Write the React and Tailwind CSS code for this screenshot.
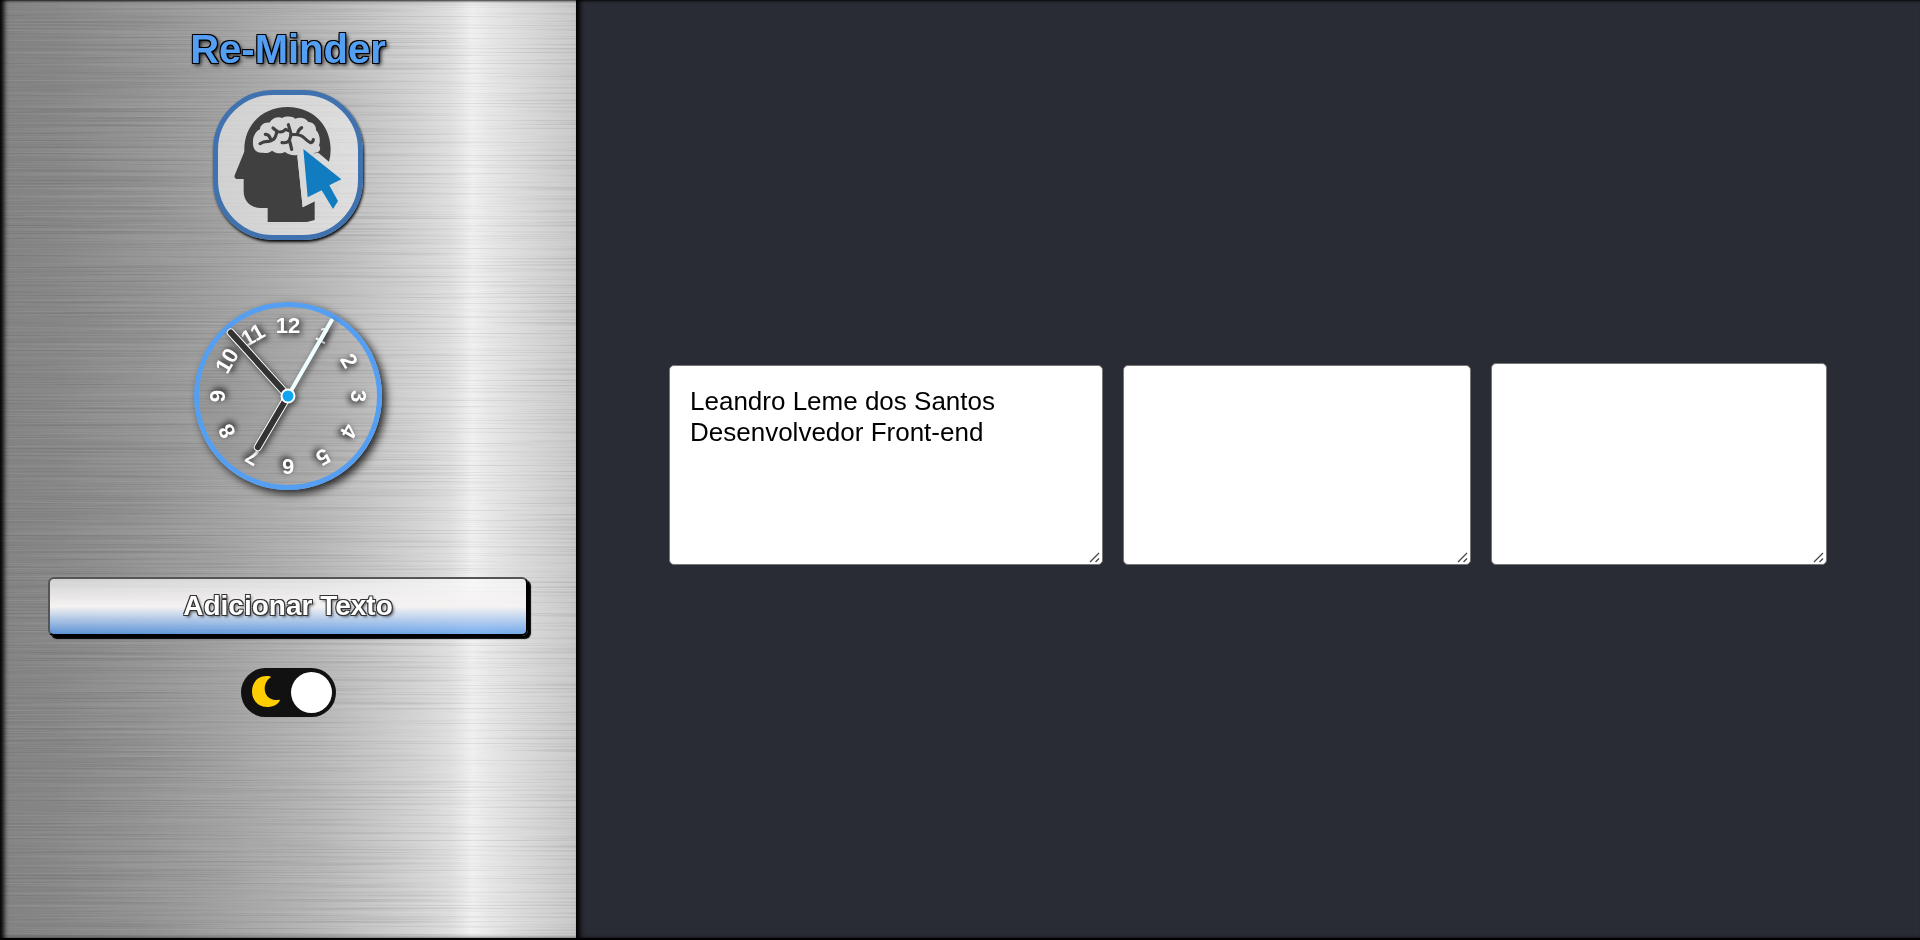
const NUMERALS = [12, 1, 2, 3, 4, 5, 6, 7, 8, 9, 10, 11];

function BrushedMetal() {
  return (
    <svg className="absolute inset-0 h-full w-full" preserveAspectRatio="none">
      <defs>
        <linearGradient id="steel" gradientUnits="userSpaceOnUse" x1="0" y1="0" x2="576" y2="0">
          <stop offset="0" stopColor="#838383" />
          <stop offset="0.1" stopColor="#878787" />
          <stop offset="0.25" stopColor="#939393" />
          <stop offset="0.4" stopColor="#a3a3a3" />
          <stop offset="0.55" stopColor="#b6b6b6" />
          <stop offset="0.66" stopColor="#c8c8c8" />
          <stop offset="0.74" stopColor="#d6d6d6" />
          <stop offset="0.785" stopColor="#e0e0e0" />
          <stop offset="0.82" stopColor="#f0f0f0" />
          <stop offset="0.855" stopColor="#e6e6e6" />
          <stop offset="0.9" stopColor="#dcdcdc" />
          <stop offset="1" stopColor="#c8c8c8" />
        </linearGradient>
        <filter id="grain" x="0" y="0" width="100%" height="100%" colorInterpolationFilters="sRGB">
          <feTurbulence type="fractalNoise" baseFrequency="0.004 0.6" numOctaves="3" seed="7" />
          <feColorMatrix values="1.6 0 0 0 -0.3  1.6 0 0 0 -0.3  1.6 0 0 0 -0.3  0 0 0 0 0.085" />
        </filter>
      </defs>
      <rect width="100%" height="100%" fill="url(#steel)" />
      <rect width="100%" height="100%" filter="url(#grain)" className="mix-blend-hard-light" />
    </svg>
  );
}

function Logo() {
  return (
    <div className="h-[150px] w-[150px] rounded-[60px] border-[5px] border-[#3f72af] bg-[#f2f2f2]/60 shadow-[1px_2px_3px_#000]">
      <svg viewBox="55 45 420 420" className="h-full w-full">
        <path
          d="M134 214C132 135 188 81 264 81C342 81 393 139 393 208Q393 228 388 245L356 218L293 227L309 382L345 364V420L322 426H204V384H184C153 384 132 364 132 334V297H110Q103 295 105 286L132 220Z"
          fill="#404040"
        />
        <path
          d="M190 218C169 220 160 208 160 190C158 170 168 154 181 148C181 135 195 126 209 128C219 114 235 109 247 114C261 107 279 109 287 116C302 110 319 115 326 126C343 127 350 139 349 151C361 162 363 184 358 196C367 209 357 220 345 218C335 227 315 230 307 221C287 229 267 226 256 216C242 224 227 219 217 212C209 219 199 220 190 218Z"
          fill="#d6d6d6"
        />
        <g fill="none" stroke="#404040" strokeWidth="9.5" strokeLinecap="round" strokeLinejoin="round">
          <path d="M181 191Q192 183 207 184Q224 181 228 168L232 154L220 144M197 163Q208 162 213 178" />
          <path d="M232 154Q246 160 258 148L272 154L266 134M272 154Q276 164 269 180Q265 190 247 188M269 180Q273 194 276 208" />
          <path d="M276 164Q302 161 314 174Q325 185 333 188Q340 186 341 179M294 163Q294 151 306 143" />
        </g>
        <path d="M311 207L293 227L309 382L345 364L366 331L400 387L425 298Z" fill="#d9d9d9" />
        <path d="M311 207L425 298L389 316L415 363L400 387L366 331L324 352Z" fill="#117dc0" />
      </svg>
    </div>
  );
}

function Clock() {
  return (
    <div className="relative h-[188px] w-[188px] rounded-full border-[5px] border-[#559ff2] shadow-[4px_4px_8px_#000c]">
      <div className="absolute inset-0 rounded-full bg-black/5" />
      {NUMERALS.map((n, i) => (
        <div
          key={n}
          className="absolute inset-[6px] text-center text-[22px] leading-[25px] font-bold text-white [text-shadow:2px_2px_6px_#000]"
          style={{ transform: `rotate(${i * 30}deg)` }}
        >
          {n}
        </div>
      ))}
      <svg viewBox="-89 -89 178 178" className="absolute inset-0 h-full w-full overflow-visible [filter:drop-shadow(2px_2px_3px_#0009)]">
        <g transform="rotate(210.5)">
          <rect x="-3.5" y="-63" width="7" height="66" rx="3.5" fill="#333" stroke="#fff" strokeWidth="1" />
        </g>
        <g transform="rotate(-42)">
          <rect x="-3.5" y="-89" width="7" height="92" rx="3.5" fill="#333" stroke="#fff" strokeWidth="1" />
        </g>
        <g transform="rotate(30)">
          <rect x="-2" y="-89" width="4" height="90" rx="1" fill="#f0ffff" />
        </g>
        <circle r="6.5" fill="#10a5ef" stroke="#fff" strokeWidth="2" />
      </svg>
    </div>
  );
}

function ThemeSwitch() {
  return (
    <button className="mt-8 flex h-[49px] w-[95px] items-center justify-between rounded-full bg-[#111] pr-1 pl-[11px]" aria-label="Tema">
      <svg viewBox="0 0 28 31" className="-mt-[3px] h-[31px] w-7">
        <path d="M18.5 .6C6.500-2 0 6.500 0 15.500C0 24.500 6.500 31 15 31C21.500 31 26 28.500 27.800 24.500C28 23.800 27.500 23.500 26.800 23.700C18.500 25.500 12.700 19.500 12.700 13C12.700 8 15 4 18.500 1.600Q19 1 18.500 .6Z" fill="#ffcd00" />
      </svg>
      <span className="h-[41px] w-[41px] rounded-full bg-white" />
    </button>
  );
}

function Note({ size, text }) {
  return (
    <div className={`relative ${size}`}>
      <textarea
        className="block h-full w-full resize-none rounded-[5px] border border-[#767676] bg-white p-5 text-[26px] leading-[31px] text-black"
        defaultValue={text}
      />
      <svg viewBox="0 0 11 11" className="pointer-events-none absolute right-[3px] bottom-[2px] h-[11px] w-[11px]">
        <path d="M1 10L10 1M6.500 10L10 6.500" stroke="#484848" strokeWidth="1.3" />
      </svg>
    </div>
  );
}

export default function App() {
  return (
    <div className="flex h-[940px] w-[1920px] overflow-hidden bg-[#2a2c35] font-['Liberation_Sans',Arial,sans-serif]">
      <aside className="relative h-full w-[576px] shrink-0 overflow-hidden">
        <BrushedMetal />
        <div className="relative flex h-full flex-col items-center border-b-2 border-black shadow-[inset_5px_0_5px_-1px_#000,inset_0_2px_2px_-1px_#0009]">
          <h1 className="mt-[26px] h-16 text-[40px] leading-[46px] font-bold text-[#559ff2] [text-shadow:-1px_-1px_0_#000,1px_-1px_0_#000,-1px_1px_0_#000,1px_1px_0_#000,2px_2px_4px_#000]">
            Re-Minder
          </h1>
          <Logo />
          <div className="mt-[62px]">
            <Clock />
          </div>
          <button className="mt-[87px] h-[59px] w-[480px] rounded-[6px] border-2 border-[#555] border-r-black border-b-black bg-[linear-gradient(to_bottom,#ffffff99_0%,#f5f2f2_50%,#3f8ff0b8_100%)] bg-origin-border pb-0.5 text-[28px] font-bold text-white shadow-[3px_3px_1px_#000]">
            <span className="[text-shadow:-1px_-1px_0_#333,1px_-1px_0_#333,-1px_1px_0_#333,1px_1px_0_#333,2px_2px_3px_#0009]">
              Adicionar Texto
            </span>
          </button>
          <ThemeSwitch />
        </div>
      </aside>
      <main className="flex flex-1 items-end gap-5 border-b-2 border-black pb-[373px] pl-[93px] shadow-[inset_5px_0_5px_-1px_#000,inset_0_2px_2px_-1px_#0009]">
        <Note size="h-[200px] w-[434px]" text={"Leandro Leme dos Santos\nDesenvolvedor Front-end"} />
        <Note size="h-[200px] w-[348px]" text="" />
        <Note size="h-[202px] w-[336px]" text="" />
      </main>
    </div>
  );
}
